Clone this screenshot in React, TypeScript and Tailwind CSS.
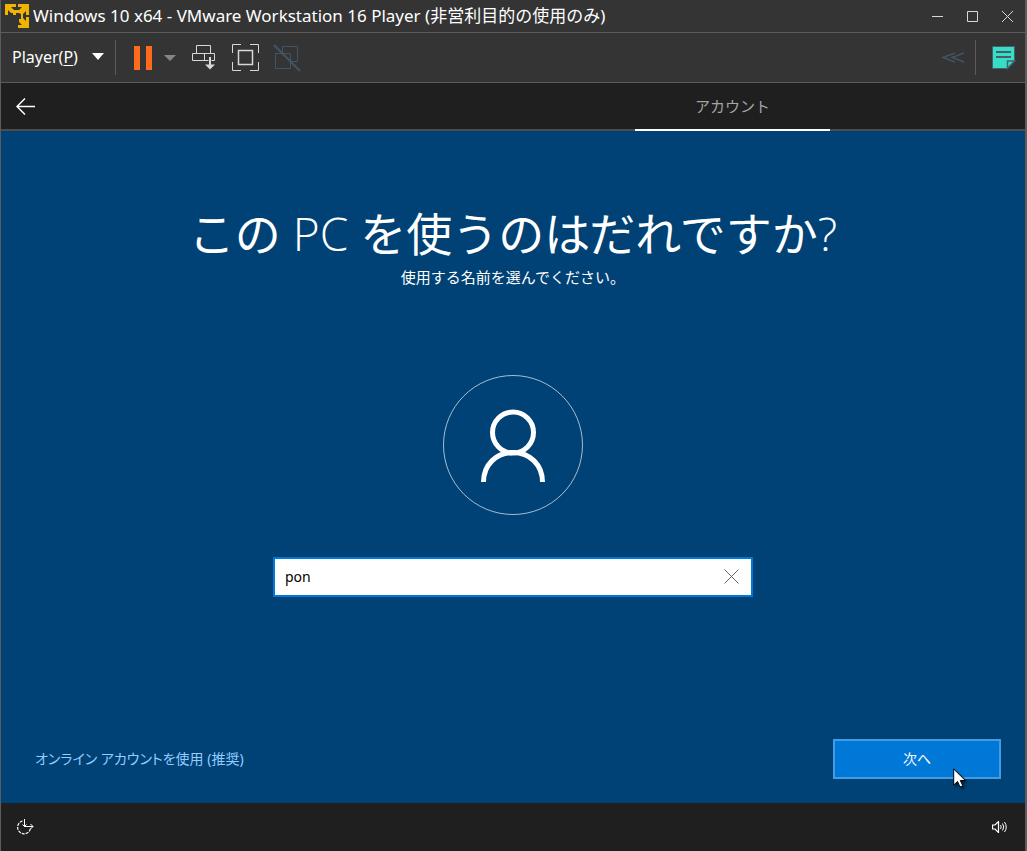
import { useState } from "react";

function VmwareLogo() {
  return (
    <svg width="24" height="24" viewBox="0 0 24 24" fill="#f0b400" aria-hidden="true">
      <path d="M0 0h11v3H6l3 3h5l3-3h-4V0h11v11h-3V7l-3 3v4l3 3v-4h3v11H13v-3h4l-3-3v-3h2v-5l-2-1h-3v2H8V9H6L3 6v5H0z" />
    </svg>
  );
}

function SendKeysIcon() {
  return (
    <svg width="24" height="26" viewBox="0 0 24 26" fill="none" stroke="#d8d8d8" aria-hidden="true">
      <path d="M4.500.5h14v8h-14z" />
      <path d="M.5 8.500h12v7H.5zM12.500 15.500v-7h10v7h-3M12.500 15.500h4" />
      <path d="M18 12v9" strokeWidth="2" />
      <path d="M13 19.500l5 5 5-5z" fill="#d8d8d8" stroke="none" />
    </svg>
  );
}

function FullScreenIcon() {
  return (
    <svg width="27" height="27" viewBox="0 0 27 27" fill="none" stroke="#d8d8d8" aria-hidden="true">
      <path d="M.5 9V.5H9M18 .5h8.500V9M26.500 18v8.500H18M9 26.500H.5V18" />
      <path d="M6.500 6.500h14v14h-14z" strokeWidth="1.500" />
    </svg>
  );
}

function UnityIcon() {
  return (
    <svg width="28" height="28" viewBox="0 0 28 28" fill="none" stroke="#435564" aria-hidden="true">
      <path d="M9.500 9.500v-7h15v15h-7" />
      <path d="M2.500 9.500h15v15h-15z" />
      <path d="M1 1l26 26" strokeWidth="2" />
    </svg>
  );
}

function NoteIcon() {
  return (
    <svg width="24" height="24" viewBox="0 0 24 24" aria-hidden="true">
      <path d="M.5.5h22v15l-7 7H.5z" fill="#36dec8" stroke="#46606a" />
      <path d="M15.500 22.500v-7.500h7z" fill="#36dec8" stroke="#46606a" strokeWidth="1.500" />
      <path d="M4 6h15M4 11h15" stroke="#46606a" strokeWidth="2" />
    </svg>
  );
}

function TitleBar() {
  return (
    <header className="flex h-8 items-center bg-[#343434] pl-1 text-white">
      <VmwareLogo />
      <h1 className="ml-1 flex-1 truncate text-[17px] leading-8">
        Windows 10 x64 - VMware Workstation 16 Player (非営利目的の使用のみ)
      </h1>
      <div className="flex text-[#d8d8d8]">
        <button aria-label="最小化" className="flex h-8 w-[35px] items-center justify-center">
          <svg width="11" height="11" viewBox="0 0 11 11" stroke="currentColor">
            <path d="M0 5.500h11" />
          </svg>
        </button>
        <button aria-label="最大化" className="flex h-8 w-[35px] items-center justify-center">
          <svg width="11" height="11" viewBox="0 0 11 11" fill="none" stroke="currentColor">
            <path d="M.5.5h10v10H.5z" />
          </svg>
        </button>
        <button aria-label="閉じる" className="flex h-8 w-[35px] items-center justify-center">
          <svg width="11" height="11" viewBox="0 0 11 11" stroke="currentColor">
            <path d="M0 0l11 11M11 0L0 11" />
          </svg>
        </button>
      </div>
    </header>
  );
}

function Toolbar() {
  return (
    <div className="flex h-[51px] items-center border-y border-[#5c5c5c] bg-[#343434] text-white">
      <button className="flex items-center gap-[14px] pb-[2px] pl-[11px] text-base">
        <span>
          Player(<u className="underline-offset-2">P</u>)
        </span>
        <svg width="12" height="7" viewBox="0 0 12 7" fill="#fff" aria-hidden="true">
          <path d="M0 0h12L6 7z" />
        </svg>
      </button>
      <div className="ml-[11px] h-[35px] w-px bg-[#5c5c5c]" />
      <button aria-label="一時停止" className="ml-[18px]">
        <svg width="18" height="24" viewBox="0 0 18 24" fill="#ff6a1c">
          <path d="M0 0h6v24H0zM12 0h6v24h-6z" />
        </svg>
      </button>
      <button aria-label="電源メニュー" className="ml-3">
        <svg width="12" height="6" viewBox="0 0 12 6" fill="#858585">
          <path d="M0 0h12L6 6z" />
        </svg>
      </button>
      <button aria-label="Ctrl+Alt+Del を送信" className="ml-4">
        <SendKeysIcon />
      </button>
      <button aria-label="全画面" className="ml-4">
        <FullScreenIcon />
      </button>
      <button aria-label="ユニティ" className="ml-[14px]" disabled>
        <UnityIcon />
      </button>
      <div className="flex-1" />
      <button aria-label="デバイス" disabled>
        <svg width="24" height="11" viewBox="0 0 24 11" fill="none" stroke="#435564" strokeWidth="1.500">
          <path d="M14 1L2 5.500 14 10M23 1L11 5.500 23 10" />
        </svg>
      </button>
      <div className="ml-[10px] h-[35px] w-px bg-[#5c5c5c]" />
      <button aria-label="メモ" className="mr-[9px] ml-4">
        <NoteIcon />
      </button>
    </div>
  );
}

function SetupNav() {
  return (
    <nav className="flex h-12 items-center justify-between border-b-2 border-[#4c4c4c] bg-[#1f1f1f]">
      <button aria-label="戻る" className="ml-[15px]">
        <svg width="19" height="17" viewBox="0 0 19 17" fill="none" stroke="#fff" strokeWidth="1.500">
          <path d="M9 .5l-8 8 8 8M1 8.500h18" />
        </svg>
      </button>
      <a
        href="#account"
        className="mr-[195px] -mb-[2px] flex h-12 w-[195px] items-center justify-center border-b-2 border-white text-[15px] text-[#a5a5a5]"
      >
        アカウント
      </a>
    </nav>
  );
}

function UserAvatar() {
  return (
    <svg width="140" height="140" viewBox="0 0 140 140" fill="none" stroke="#fff" aria-hidden="true">
      <circle cx="70" cy="70" r="69.500" strokeOpacity=".65" />
      <circle cx="70" cy="57.500" r="20.500" strokeWidth="5" />
      <path d="M40.500 107c0-17 12.500-29.500 29.500-29.500S99.500 90 99.500 107" strokeWidth="5" />
    </svg>
  );
}

function Cursor() {
  return (
    <svg
      width="14"
      height="21"
      viewBox="0 0 14 21"
      className="pointer-events-none absolute top-[29px] left-[120px] drop-shadow-[2px_2px_1px_rgba(0,0,0,0.5)]"
      aria-hidden="true"
    >
      <path d="M.7 1v16l3.800-3.500L7 19l2.800-1.200-2.500-5.300h5z" fill="#fff" stroke="#000" />
    </svg>
  );
}

function App() {
  const [name, setName] = useState("pon");

  return (
    <div className="flex min-h-screen flex-col border-r-2 border-l border-[#5c5c5c] bg-[#1f1f1f] font-['Noto_Sans','Noto_Sans_CJK_JP',sans-serif]">
      <TitleBar />
      <Toolbar />
      <SetupNav />
      <main className="flex flex-1 flex-col items-center bg-[#004275] text-white">
        <h2 className="mt-[70px] text-center font-['Open_Sans','Noto_Sans_CJK_JP',sans-serif] text-[46px] leading-[64px]">
          この <span className="font-light">PC</span> を使うのはだれですか
          <span className="font-light">?</span>
        </h2>
        <p className="text-[15px] leading-6">使用する名前を選んでください。</p>
        <div className="mt-[86px]">
          <UserAvatar />
        </div>
        <div className="mt-[42px] flex h-10 w-[480px] max-w-full items-center border-2 border-[#0078d7] bg-white">
          <input
            aria-label="名前"
            value={name}
            onChange={(e) => setName(e.target.value)}
            className="h-full min-w-0 flex-1 px-[10px] pb-[2px] text-sm text-black outline-none"
          />
          <button aria-label="クリア" className="mr-3 pb-[2px]" onClick={() => setName("")}>
            <svg width="15" height="15" viewBox="0 0 15 15" stroke="#666" aria-hidden="true">
              <path d="M.5.5l14 14M14.500.5l-14 14" />
            </svg>
          </button>
        </div>
        <div className="mt-auto mb-6 flex w-full items-center justify-between pr-6 pl-[34px]">
          <a href="#online" className="text-sm text-[#94ccff] [font-feature-settings:'palt']">
            オンライン アカウントを使用 (推奨)
          </a>
          <div className="relative">
            <button className="h-10 w-[168px] border-2 border-[#429ce3] bg-[#0078d7] text-sm">次へ</button>
            <Cursor />
          </div>
        </div>
      </main>
      <footer className="flex h-12 items-center justify-between bg-[#1f1f1f] pr-[18px] pl-4 text-white">
        <button aria-label="簡単操作">
          <svg width="17" height="16" viewBox="0 0 17 16" fill="none" stroke="#fff" aria-hidden="true">
            <path d="M5.500 2A6.500 6.500 0 1 0 13.500 9.500" strokeWidth="1.200" strokeDasharray="3 1" />
            <path d="M7.500 0v7.500H16M5.500 5.500l2 2 2-2M13.500 5l2.500 2.500-2.500 2.500" />
          </svg>
        </button>
        <button aria-label="音量">
          <svg width="15" height="12" viewBox="0 0 15 12" fill="none" stroke="#fff" aria-hidden="true">
            <path d="M.5 4v4h2.500L6.500 11.500V.5L3 4z" strokeWidth="1.200" />
            <path d="M8.500 4q1.500 2 0 4M10.500 2.500q2.500 3.500 0 7M12.500 1q3.500 5 0 10" />
          </svg>
        </button>
      </footer>
    </div>
  );
}

export default App;
